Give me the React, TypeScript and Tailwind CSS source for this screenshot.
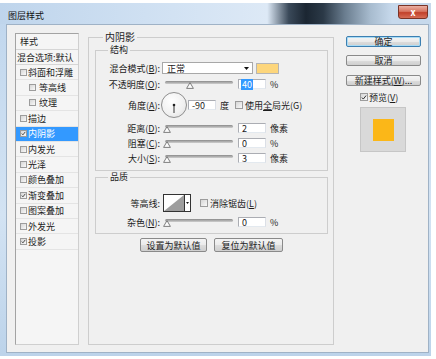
import React from 'react';

const LAYERS: { name: React.ReactNode; checked?: boolean; indent?: boolean; active?: boolean }[] = [
  { name: '斜面和浮雕' },
  { name: '等高线', indent: true },
  { name: '纹理', indent: true },
  { name: '描边' },
  { name: '内阴影', checked: true, active: true },
  { name: '内发光' },
  { name: '光泽' },
  { name: '颜色叠加' },
  { name: '渐变叠加', checked: true },
  { name: '图案叠加' },
  { name: '外发光' },
  { name: '投影', checked: true },
];

function Box({ checked, small }: { checked?: boolean; small?: boolean }) {
  return (
    <span
      className={`flex shrink-0 items-center justify-center border border-[#9c9c9c] bg-[linear-gradient(135deg,#d6d6d6,#f9f9f9)] ${
        small ? 'w-[7px] h-[7px]' : 'w-[8px] h-[8px]'
      }`}
    >
      {checked && (
        <svg viewBox="0 0 8 8" className="w-[7px] h-[7px]">
          <path d="M1.2 4.1 L3.1 6.1 L6.8 1.4" fill="none" stroke="#2a2a2a" strokeWidth="1.3" />
        </svg>
      )}
    </span>
  );
}

function Label({ children }: { children: React.ReactNode }) {
  return <span className="w-[64px] shrink-0 text-right whitespace-nowrap">{children}</span>;
}

function Slider({ at }: { at: number }) {
  return (
    <div className="relative ml-[5px] w-[68px] h-[14px] shrink-0">
      <div className="absolute left-0 right-0 top-[4px] h-[3px] rounded-full bg-[linear-gradient(#8a8a8a,#cfcfcf)]" />
      <svg viewBox="0 0 8 7" className="absolute top-[5px] w-[8px] h-[7px]" style={{ left: at }}>
        <path d="M4 0.6 L7.4 6.4 L0.6 6.4 Z" fill="#fbfbfb" stroke="#707070" strokeWidth="0.9" />
      </svg>
    </div>
  );
}

function Field({ value, selected, className = 'ml-[5px]' }: { value: string; selected?: boolean; className?: string }) {
  return (
    <div
      className={`${className} flex w-[28px] h-[10px] shrink-0 items-center border border-[#abadb3] border-b-[#e3e9ef] border-r-[#dbdfe6] bg-white pl-[2px]`}
    >
      <span className={selected ? 'bg-[#3399ff] px-[1px] text-white' : 'px-[1px]'}>{value}</span>
    </div>
  );
}

function SliderRow({ label, at, value, unit, className }: { label: React.ReactNode; at: number; value: string; unit: string; className: string }) {
  return (
    <div className={`${className} flex h-[14px] items-center`}>
      <Label>{label}</Label>
      <Slider at={at} />
      <Field value={value} />
      <span className="ml-[4px]">{unit}</span>
    </div>
  );
}

function Btn({ children, primary, className = '' }: { children: React.ReactNode; primary?: boolean; className?: string }) {
  return (
    <div
      className={`${className} flex h-[11px] items-center justify-center rounded-[2px] border bg-[linear-gradient(#f4f4f4_0%,#ebebeb_50%,#dddddd_50%,#cfcfcf_100%)] whitespace-nowrap ${
        primary ? 'border-[#3c7fb1] shadow-[inset_0_0_0_1px_#a9dcf6]' : 'border-[#8a8a8a]'
      }`}
    >
      {children}
    </div>
  );
}

export default function App() {
  return (
    <div className="w-[436px] h-[359px] overflow-hidden bg-white pt-[3px] font-['Noto_Sans_CJK_SC','Noto_Sans',sans-serif] text-[9px] leading-[11px] text-[#1c1c1c]">
      <div className="flex h-[353px] w-[431px] flex-col bg-[linear-gradient(180deg,#c0d6ed,#d3e3f3_60%,#bcd3ea)] pb-[3px] pl-[6px] pr-[2px]">
        {/* title bar */}
        <div className="-ml-[6px] -mr-[2px] flex h-[21px] shrink-0 items-start justify-between bg-[linear-gradient(90deg,#bfd5ec_0%,#d2e2f3_40%,#dde9f6_62%,#3a4959_67%,#1b2632_71%,#2b3947_75%,#6a7d8f_80%,#a8bccf_86%,#c7d9ec_91%,#c7d9ec_100%)] pl-[8px] pr-[3px]">
          <span className="mt-[7px] text-[9px] leading-[11px] text-[#111]">图层样式</span>
          <div className="mt-[2px] flex h-[14px] w-[30px] items-center justify-center rounded-b-[3px] border border-[#7a3326] bg-[linear-gradient(#eab0a4,#d77561_45%,#c2412b_55%,#d66d56)] text-[9px] font-bold leading-none text-white">
            x
          </div>
        </div>

        {/* body */}
        <div className="flex flex-1 items-start border border-[#9fb2c6] bg-[#f0f0f0] pl-[8px] pt-[6px]">
          {/* style list */}
          <div className="mt-[2px] h-[312px] w-[64px] shrink-0 border border-[#a3a3a3] border-r-[#cfcfcf] border-b-[#cfcfcf] bg-[#f5f5f5]">
            <div className="flex h-[16px] items-center border-b border-[#d6d6d6] pl-[4px]">样式</div>
            <div className="flex h-[15px] items-center border-b border-[#d6d6d6] pl-[1px] whitespace-nowrap">混合选项:默认</div>
            {LAYERS.map((l, i) => (
              <div
                key={i}
                className={`flex h-[15.4px] items-center gap-[1px] border-b border-[#e4e4e4] whitespace-nowrap ${
                  l.indent ? 'pl-[13px]' : 'pl-[4px]'
                } ${l.active ? 'bg-[#3399ff] text-white' : ''}`}
              >
                <Box small checked={l.checked} />
                <span className={l.indent ? 'ml-[2px]' : ''}>{l.name}</span>
              </div>
            ))}
          </div>

          {/* inner shadow panel */}
          <fieldset className="ml-[9px] h-[314px] w-[246px] shrink-0 border border-[#cdcdcd] pl-[6px] pr-[5px]">
            <legend className="ml-[8px] px-[2px] text-[10px] leading-[12px]">内阴影</legend>

            <fieldset className="mt-[1px] h-[127px] border border-[#cdcdcd]">
              <legend className="ml-[12px] px-[2px] leading-[12px]">结构</legend>

              <div className="mt-[5px] flex h-[14px] items-center">
                <Label>
                  混合模式(<u>B</u>):
                </Label>
                <div className="ml-[2px] flex h-[12px] w-[91px] items-center justify-between border border-[#a8a8a8] bg-white pl-[4px] pr-[3px]">
                  <span>正常</span>
                  <svg viewBox="0 0 5 3" className="h-[3px] w-[5px]">
                    <path d="M0 0 H5 L2.5 3 Z" fill="#111" />
                  </svg>
                </div>
                <div className="ml-[3px] h-[11px] w-[23px] border border-[#b5b5b5] bg-[#fdd67c]" />
              </div>

              <div className="mt-[2px] flex h-[14px] items-center">
                <Label>
                  不透明度(<u>O</u>):
                </Label>
                <Slider at={21} />
                <Field value="40" selected />
                <span className="ml-[4px]">%</span>
              </div>

              <div className="mt-[1px] flex h-[26px] items-center">
                <Label>
                  角度(<u>A</u>):
                </Label>
                <div className="ml-[1px] h-[26px] w-[26px] shrink-0 rounded-full border border-[#8e8e8e] bg-[radial-gradient(circle_at_40%_35%,#ffffff,#f0f0f0_60%,#d9d9d9)]">
                  <svg viewBox="0 0 24 24" className="h-[24px] w-[24px]">
                    <line x1="12" y1="12" x2="12" y2="20" stroke="#333" strokeWidth="1" />
                    <circle cx="12" cy="12" r="1.3" fill="#222" />
                  </svg>
                </div>
                <Field value="-90" className="ml-[1px]" />
                <span className="ml-[4px]">度</span>
                <span className="ml-[6px]">
                  <Box />
                </span>
                <span className="ml-[2px] whitespace-nowrap">
                  使用<u>全</u>局光(G)
                </span>
              </div>

              <SliderRow className="mt-[3px]" label={<>距离(<u>D</u>):</>} at={-2} value="2" unit="像素" />
              <SliderRow className="mt-[1px]" label={<>阻塞(<u>C</u>):</>} at={-2} value="0" unit="%" />
              <SliderRow className="mt-[1px]" label={<>大小(<u>S</u>):</>} at={-2} value="3" unit="像素" />
            </fieldset>

            <fieldset className="h-[63px] border border-[#cdcdcd]">
              <legend className="ml-[12px] px-[2px] leading-[12px]">品质</legend>

              <div className="mt-[11px] flex h-[18px] items-center">
                <Label>等高线:</Label>
                <div className="ml-[3px] flex h-[18px] w-[28px] shrink-0 border border-[#333] bg-white">
                  <svg viewBox="0 0 20 16" preserveAspectRatio="none" className="h-[16px] w-[20px]">
                    <path d="M0 16 L20 0 L20 16 Z" fill="#9d9d9d" />
                  </svg>
                  <div className="flex w-[6px] items-center justify-center border-l border-[#333]">
                    <svg viewBox="0 0 3 2" className="h-[2px] w-[3px]">
                      <path d="M0 0 H3 L1.5 2 Z" fill="#111" />
                    </svg>
                  </div>
                </div>
                <span className="ml-[9px]">
                  <Box />
                </span>
                <span className="ml-[2px] whitespace-nowrap">
                  消除锯齿(<u>L</u>)
                </span>
              </div>

              <SliderRow className="mt-[3px]" label={<>杂色(<u>N</u>):</>} at={-2} value="0" unit="%" />
            </fieldset>

            <div className="mt-[4px] flex justify-center gap-[7px]">
              <Btn className="h-[14px] w-[67px]">设置为默认值</Btn>
              <Btn className="h-[14px] w-[69px]">复位为默认值</Btn>
            </div>
          </fieldset>

          {/* right column */}
          <div className="ml-[12px] mt-[5px] flex w-[75px] shrink-0 flex-col">
            <Btn primary>确定</Btn>
            <Btn className="mt-[8px]">取消</Btn>
            <Btn className="mt-[9px]">
              新建样式(<u>W</u>)...
            </Btn>
            <div className="mt-[6px] flex h-[10px] items-center pl-[14px]">
              <Box checked />
              <span className="ml-[1px]">
                预览(<u>V</u>)
              </span>
            </div>
            <div className="ml-[14px] mt-[5px] flex h-[45px] w-[46px] items-center justify-center border border-[#c6c6c6] bg-[#d9d9d9]">
              <div className="h-[22px] w-[21px] bg-[#fbb718]" />
            </div>
          </div>
        </div>
      </div>
    </div>
  );
}
